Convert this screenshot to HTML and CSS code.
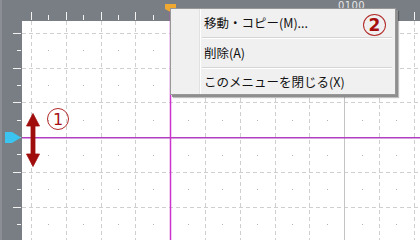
FILE: index.html
```html
<!DOCTYPE html>
<html lang="ja">
<head>
<meta charset="utf-8">
<link rel="stylesheet" href="styles.css">
</head>
<body>
<div class="app">
  <div class="corner"></div>
  <div class="ruler-top">
    <svg width="398" height="21" viewBox="0 0 398 21">
      <g stroke="#f2f2f2" stroke-width="1">
        <line x1="9.5" y1="12" x2="9.5" y2="20"/><line x1="26.5" y1="15" x2="26.5" y2="20"/>
        <line x1="44.5" y1="12" x2="44.5" y2="20"/><line x1="61.5" y1="15" x2="61.5" y2="20"/>
        <line x1="79.5" y1="12" x2="79.5" y2="20"/><line x1="96.5" y1="15" x2="96.5" y2="20"/>
        <line x1="113.5" y1="12" x2="113.5" y2="20"/><line x1="131.5" y1="15" x2="131.5" y2="20"/>
        <line x1="148.5" y1="12" x2="148.5" y2="20"/><line x1="166.5" y1="15" x2="166.5" y2="20"/>
        <line x1="183.5" y1="12" x2="183.5" y2="20"/><line x1="200.5" y1="15" x2="200.5" y2="20"/>
        <line x1="218.5" y1="12" x2="218.5" y2="20"/><line x1="235.5" y1="15" x2="235.5" y2="20"/>
        <line x1="253.5" y1="12" x2="253.5" y2="20"/><line x1="270.5" y1="15" x2="270.5" y2="20"/>
        <line x1="287.5" y1="12" x2="287.5" y2="20"/><line x1="305.5" y1="15" x2="305.5" y2="20"/>
        <line x1="322.5" y1="12" x2="322.5" y2="20"/><line x1="340.5" y1="15" x2="340.5" y2="20"/>
        <line x1="357.5" y1="12" x2="357.5" y2="20"/><line x1="374.5" y1="15" x2="374.5" y2="20"/>
        <line x1="392.5" y1="12" x2="392.5" y2="20"/>
      </g>
      <text x="316" y="9" class="ruler-label">0100</text>
      <line x1="148.5" y1="10" x2="148.5" y2="21" stroke="#cc33cc" stroke-width="1.5"/>
      <path d="M143 4 H154 V9 L148.5 12 L143 9 Z" fill="#f0a830"/>
    </svg>
  </div>
  <div class="ruler-left">
    <svg width="22" height="219" viewBox="0 0 22 219">
      <g stroke="#f2f2f2" stroke-width="1">
        <line x1="13" y1="12.5" x2="21" y2="12.5"/><line x1="17" y1="29.5" x2="21" y2="29.5"/>
        <line x1="13" y1="47.5" x2="21" y2="47.5"/><line x1="17" y1="64.5" x2="21" y2="64.5"/>
        <line x1="13" y1="81.5" x2="21" y2="81.5"/><line x1="17" y1="99.5" x2="21" y2="99.5"/>
        <line x1="13" y1="116.5" x2="21" y2="116.5"/><line x1="17" y1="133.5" x2="21" y2="133.5"/>
        <line x1="13" y1="151.5" x2="21" y2="151.5"/><line x1="17" y1="168.5" x2="21" y2="168.5"/>
        <line x1="13" y1="186.5" x2="21" y2="186.5"/><line x1="17" y1="203.5" x2="21" y2="203.5"/>
      </g>
      <path d="M5 111 H12 L21 116.5 L12 122 H5 Z" fill="#3cc4f0"/>
    </svg>
  </div>
  <div class="canvas">
    <svg width="398" height="219" viewBox="0 0 398 219">
      <g stroke="#cfcfcf" stroke-width="1" stroke-dasharray="4 3">
        <line x1="9.5" y1="0" x2="9.5" y2="219"/>
        <line x1="44.5" y1="0" x2="44.5" y2="219"/>
        <line x1="79.5" y1="0" x2="79.5" y2="219"/>
        <line x1="113.5" y1="0" x2="113.5" y2="219"/>
        <line x1="183.5" y1="0" x2="183.5" y2="219"/>
        <line x1="218.5" y1="0" x2="218.5" y2="219"/>
        <line x1="253.5" y1="0" x2="253.5" y2="219"/>
        <line x1="287.5" y1="0" x2="287.5" y2="219"/>
        <line x1="357.5" y1="0" x2="357.5" y2="219"/>
        <line x1="392.5" y1="0" x2="392.5" y2="219"/>
        <line x1="0" y1="12.5" x2="398" y2="12.5"/>
        <line x1="0" y1="47.5" x2="398" y2="47.5"/>
        <line x1="0" y1="81.5" x2="398" y2="81.5"/>
        <line x1="0" y1="151.5" x2="398" y2="151.5"/>
        <line x1="0" y1="186.5" x2="398" y2="186.5"/>
      </g>
      <line x1="322.5" y1="0" x2="322.5" y2="219" stroke="#c4c4c4"/>
      <g fill="#b4b4b4">
        <rect x="26" y="29" width="1" height="1"/><rect x="61" y="29" width="1" height="1"/><rect x="96" y="29" width="1" height="1"/><rect x="131" y="29" width="1" height="1"/><rect x="166" y="29" width="1" height="1"/><rect x="200" y="29" width="1" height="1"/><rect x="235" y="29" width="1" height="1"/><rect x="270" y="29" width="1" height="1"/><rect x="305" y="29" width="1" height="1"/><rect x="340" y="29" width="1" height="1"/><rect x="374" y="29" width="1" height="1"/>
        <rect x="26" y="64" width="1" height="1"/><rect x="61" y="64" width="1" height="1"/><rect x="96" y="64" width="1" height="1"/><rect x="131" y="64" width="1" height="1"/><rect x="166" y="64" width="1" height="1"/><rect x="200" y="64" width="1" height="1"/><rect x="235" y="64" width="1" height="1"/><rect x="270" y="64" width="1" height="1"/><rect x="305" y="64" width="1" height="1"/><rect x="340" y="64" width="1" height="1"/><rect x="374" y="64" width="1" height="1"/>
        <rect x="26" y="99" width="1" height="1"/><rect x="61" y="99" width="1" height="1"/><rect x="96" y="99" width="1" height="1"/><rect x="131" y="99" width="1" height="1"/><rect x="166" y="99" width="1" height="1"/><rect x="200" y="99" width="1" height="1"/><rect x="235" y="99" width="1" height="1"/><rect x="270" y="99" width="1" height="1"/><rect x="305" y="99" width="1" height="1"/><rect x="340" y="99" width="1" height="1"/><rect x="374" y="99" width="1" height="1"/>
        <rect x="26" y="134" width="1" height="1"/><rect x="61" y="134" width="1" height="1"/><rect x="96" y="134" width="1" height="1"/><rect x="131" y="134" width="1" height="1"/><rect x="166" y="134" width="1" height="1"/><rect x="200" y="134" width="1" height="1"/><rect x="235" y="134" width="1" height="1"/><rect x="270" y="134" width="1" height="1"/><rect x="305" y="134" width="1" height="1"/><rect x="340" y="134" width="1" height="1"/><rect x="374" y="134" width="1" height="1"/>
        <rect x="26" y="168" width="1" height="1"/><rect x="61" y="168" width="1" height="1"/><rect x="96" y="168" width="1" height="1"/><rect x="131" y="168" width="1" height="1"/><rect x="166" y="168" width="1" height="1"/><rect x="200" y="168" width="1" height="1"/><rect x="235" y="168" width="1" height="1"/><rect x="270" y="168" width="1" height="1"/><rect x="305" y="168" width="1" height="1"/><rect x="340" y="168" width="1" height="1"/><rect x="374" y="168" width="1" height="1"/>
        <rect x="26" y="203" width="1" height="1"/><rect x="61" y="203" width="1" height="1"/><rect x="96" y="203" width="1" height="1"/><rect x="131" y="203" width="1" height="1"/><rect x="166" y="203" width="1" height="1"/><rect x="200" y="203" width="1" height="1"/><rect x="235" y="203" width="1" height="1"/><rect x="270" y="203" width="1" height="1"/><rect x="305" y="203" width="1" height="1"/><rect x="340" y="203" width="1" height="1"/><rect x="374" y="203" width="1" height="1"/>
      </g>
      <rect x="0" y="116" width="398" height="1.5" fill="#b040c0"/>
      <line x1="148.5" y1="0" x2="148.5" y2="219" stroke="#cc33cc" stroke-width="1.5"/>
      <path d="M11 92.5 L4.5 105 H9 V133 H4.5 L11 145.5 L17.5 133 H13 V105 H17.5 Z" fill="#a00d0d" stroke="#a00d0d" stroke-width="0.8" stroke-linejoin="round"/>
    </svg>
  </div>

  <div class="badge badge-one">1</div>

  <div class="menu">
    <div class="menu-item"><span class="menu-text">移動・コピー(M)...</span></div>
    <div class="menu-sep"></div>
    <div class="menu-item"><span class="menu-text">削除(A)</span></div>
    <div class="menu-sep"></div>
    <div class="menu-item menu-item-last"><span class="menu-text">このメニューを閉じる(X)</span></div>
    <div class="badge badge-two">2</div>
  </div>
</div>
</body>
</html>
```

FILE: styles.css
```css
html, body {
  margin: 0;
  padding: 0;
  background: #ffffff;
}

.app {
  position: relative;
  width: 420px;
  height: 240px;
  overflow: hidden;
  display: grid;
  grid-template-columns: 22px 1fr;
  grid-template-rows: 21px 1fr;
  font-family: "Noto Sans CJK JP", "Noto Sans", sans-serif;
}

.corner {
  background: #797e84;
  border-left: 2px solid #8b8f95;
}

.ruler-top {
  background: #797e84;
  overflow: hidden;
}

.ruler-left {
  background: #797e84;
  border-left: 2px solid #8b8f95;
  box-sizing: border-box;
  overflow: hidden;
}

.ruler-left svg {
  margin-left: -2px;
}

.ruler-top svg,
.ruler-left svg,
.canvas svg {
  display: block;
}

.ruler-label {
  font-family: "DejaVu Sans", sans-serif;
  font-size: 10px;
  fill: #e6e6e6;
  letter-spacing: 0.4px;
}

.canvas {
  background: #ffffff;
  overflow: hidden;
}

.badge {
  position: absolute;
  box-sizing: border-box;
  border: 1px solid #b22a2a;
  border-radius: 50%;
  color: #a50f0f;
  display: flex;
  align-items: center;
  justify-content: center;
  font-family: "DejaVu Sans", sans-serif;
  background: transparent;
}

.badge-one {
  left: 47px;
  top: 108px;
  width: 22px;
  height: 22px;
  font-size: 16px;
  font-weight: normal;
}

.badge-two {
  left: 192px;
  top: 5px;
  width: 23px;
  height: 22px;
  font-size: 17px;
  font-weight: bold;
}

.menu {
  position: absolute;
  left: 170px;
  top: 8px;
  width: 226px;
  height: 87px;
  box-sizing: border-box;
  border: 1px solid #979797;
  box-shadow: 2px 2px 0 #8e8e8e, 3px 3px 1px rgba(0, 0, 0, 0.25);
  display: flex;
  flex-direction: column;
  padding-left: 29px;
  background: linear-gradient(to right, #f0f0f0 0, #f0f0f0 28px, #e2e2e2 28px, #e2e2e2 29px, #ffffff 29px, #ffffff 30px, #f0f0f0 30px);
}

.menu-item {
  height: 28px;
  display: flex;
  align-items: center;
  padding-left: 4px;
}

.menu-item-last {
  height: 25px;
}

.menu-text {
  font-size: 12.5px;
  line-height: 14px;
  color: #111111;
}

.menu-sep {
  height: 1px;
  margin: 0 3px 1px 2px;
  background: #d5d5d5;
  box-shadow: 0 1px 0 #ffffff;
}
```
